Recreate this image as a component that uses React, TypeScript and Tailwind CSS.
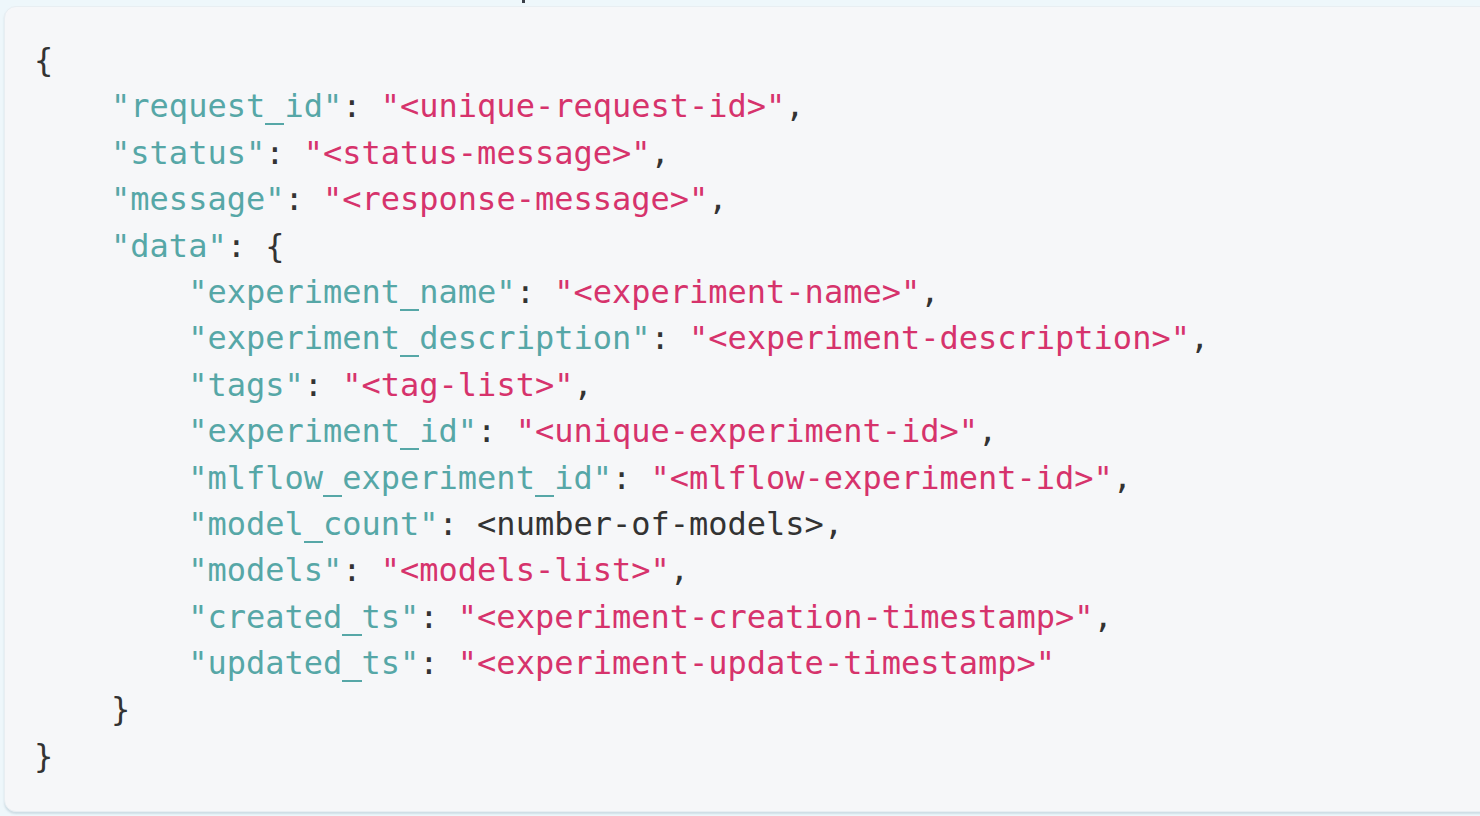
import React from "react";

type Tok = { t: string; c: "k" | "s" | "p" };

const K = (t: string): Tok => ({ t, c: "k" });
const S = (t: string): Tok => ({ t, c: "s" });
const P = (t: string): Tok => ({ t, c: "p" });

const lines: Tok[][] = [
  [P("{")],
  [P("    "), K('"request_id"'), P(": "), S('"<unique-request-id>"'), P(",")],
  [P("    "), K('"status"'), P(": "), S('"<status-message>"'), P(",")],
  [P("    "), K('"message"'), P(": "), S('"<response-message>"'), P(",")],
  [P("    "), K('"data"'), P(": {")],
  [P("        "), K('"experiment_name"'), P(": "), S('"<experiment-name>"'), P(",")],
  [P("        "), K('"experiment_description"'), P(": "), S('"<experiment-description>"'), P(",")],
  [P("        "), K('"tags"'), P(": "), S('"<tag-list>"'), P(",")],
  [P("        "), K('"experiment_id"'), P(": "), S('"<unique-experiment-id>"'), P(",")],
  [P("        "), K('"mlflow_experiment_id"'), P(": "), S('"<mlflow-experiment-id>"'), P(",")],
  [P("        "), K('"model_count"'), P(": <number-of-models>,")],
  [P("        "), K('"models"'), P(": "), S('"<models-list>"'), P(",")],
  [P("        "), K('"created_ts"'), P(": "), S('"<experiment-creation-timestamp>"'), P(",")],
  [P("        "), K('"updated_ts"'), P(": "), S('"<experiment-update-timestamp>"')],
  [P("    }")],
  [P("}")],
];

const cls = {
  k: "text-[#56a7a7]",
  s: "text-[#d6336c]",
  p: "text-[#333333]",
};

function renderText(t: string) {
  const parts = t.split(/(_)/);
  return parts.map((p, i) => {
    if (p === "_") {
      return (
        <span
          key={i}
          className="inline-block w-[0.602em] border-b-[2px] border-current leading-none translate-y-[1px]"
        >
          <span className="opacity-0">_</span>
        </span>
      );
    }
    return <React.Fragment key={i}>{p}</React.Fragment>;
  });
}

export default function App() {
  return (
    <div className="relative w-[1480px] h-[816px] overflow-hidden bg-[#eef7fb]">
      <div className="absolute left-[522px] top-0 w-[3px] h-[3px] bg-[#3a3f48]" />
      <div className="ml-[4px] mt-[6px] w-[1500px] h-[806px] rounded-[12px] bg-[#f6f7f9] border border-[#e8eef2] shadow-[0_2px_2px_rgba(150,175,190,0.35)] pl-[29px] pt-[30px]">
        <pre
          className="m-0 text-[32px] leading-[46.4px] whitespace-pre"
          style={{ fontFamily: '"DejaVu Sans Mono", "Liberation Mono", monospace' }}
        >
          {lines.map((ln, i) => (
            <div key={i} className="h-[46.4px]">
              {ln.map((tok, j) => (
                <span key={j} className={cls[tok.c]}>
                  {renderText(tok.t)}
                </span>
              ))}
            </div>
          ))}
        </pre>
      </div>
    </div>
  );
}
